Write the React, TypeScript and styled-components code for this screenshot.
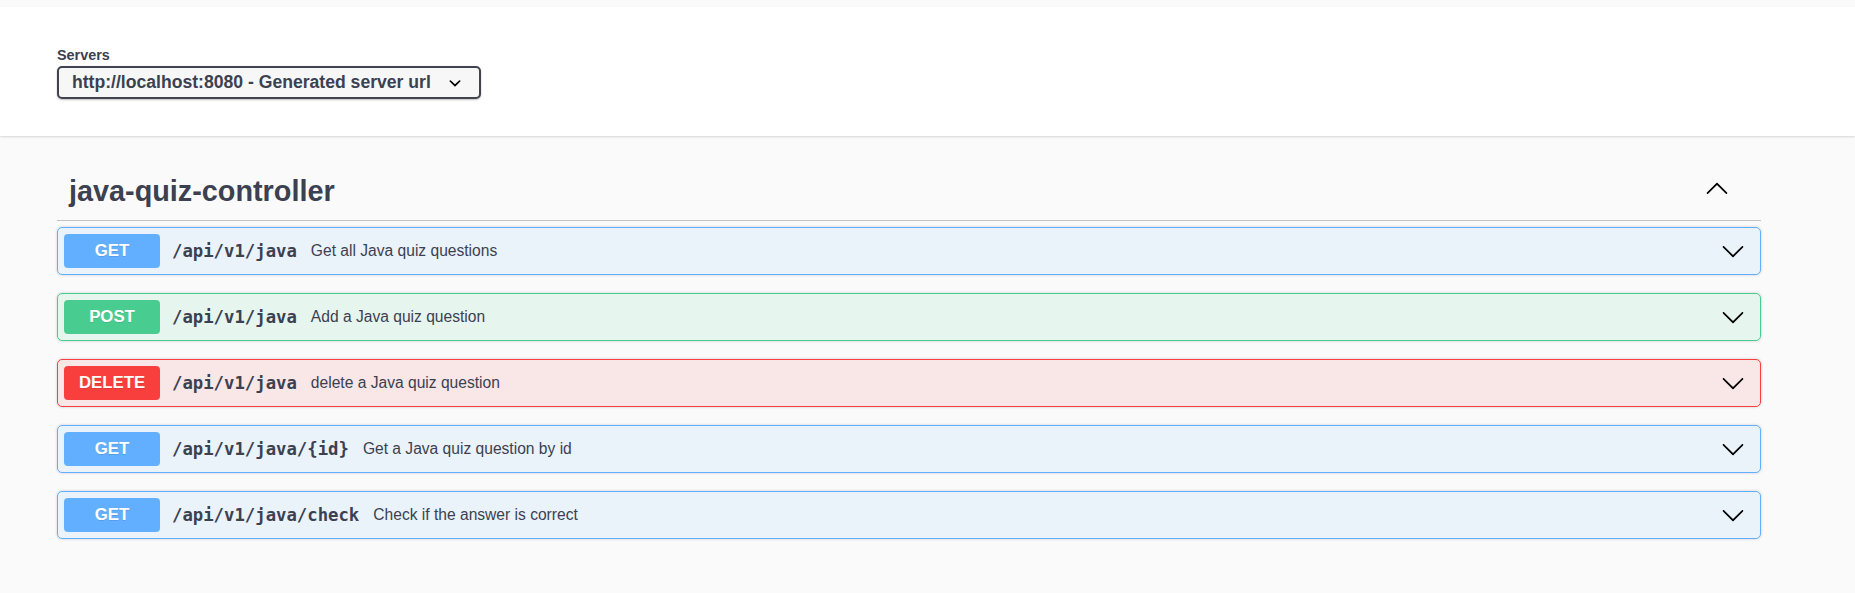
import React from "react";
import styled, { createGlobalStyle } from "styled-components";

const GlobalStyle = createGlobalStyle`
  html, body { margin: 0; padding: 0; }
  body {
    background: #fafafa;
    font-family: "Liberation Sans", Arial, sans-serif;
    color: #3b4151;
  }
`;

const Page = styled.div`
  min-height: 593px;
  padding-top: 7px;
  background: #fafafa;
`;

const SchemeContainer = styled.div`
  background: #fff;
  box-shadow: 0 1px 2px 0 rgba(0, 0, 0, 0.15);
  padding: 40px 57px 37px;
`;

const ServersBlock = styled.div`
  display: flex;
  flex-direction: column;
  align-items: flex-start;
`;

const ServersTitle = styled.span`
  font-size: 14.4px;
  line-height: 17px;
  font-weight: 700;
  color: #3b4151;
`;

const SelectBox = styled.div`
  margin-top: 2px;
  box-sizing: border-box;
  width: 424px;
  height: 33px;
  display: flex;
  align-items: center;
  justify-content: space-between;
  padding: 0 12px 0 13px;
  border: 2px solid #41444e;
  border-radius: 5px;
  background: #f7f7f7;
  box-shadow: 0 1px 2px 0 rgba(0, 0, 0, 0.25);
  font-size: 17.6px;
  font-weight: 700;
  color: #3b4151;
  white-space: nowrap;
`;

const Wrapper = styled.div`
  padding: 27px 94px 40px 57px;
`;

const TagHeading = styled.h3`
  margin: 0 0 6px;
  display: flex;
  align-items: center;
  justify-content: space-between;
  padding: 12px 32px 12px 12px;
  border-bottom: 1px solid rgba(59, 65, 81, 0.3);
  font-size: 28.8px;
  line-height: 33px;
  font-weight: 700;
  color: #3b4151;
`;

const HeadArrow = styled.svg`
  margin-bottom: 5px;
  fill: #000;
`;

const palette = {
  get: "97, 175, 254",
  post: "73, 204, 144",
  delete: "249, 62, 62",
} as const;

type Method = keyof typeof palette;

const OpBlock = styled.div<{ $m: Method }>`
  box-sizing: border-box;
  height: 48px;
  margin-bottom: 18px;
  display: flex;
  align-items: center;
  padding: 0 6px;
  border: 1px solid rgb(${(p) => palette[p.$m]});
  border-radius: 5px;
  background: rgba(${(p) => palette[p.$m]}, 0.1);
  box-shadow: 0 0 3px rgba(0, 0, 0, 0.19);
`;

const MethodBadge = styled.span<{ $m: Method }>`
  flex: none;
  width: 96px;
  height: 34px;
  display: flex;
  align-items: center;
  justify-content: center;
  border-radius: 4px;
  background: rgb(${(p) => palette[p.$m]});
  color: #fff;
  font-size: 16.8px;
  font-weight: 700;
  text-shadow: 0 1px 0 rgba(0, 0, 0, 0.1);
`;

const PathText = styled.span`
  padding: 0 14px 0 12px;
  font-family: "DejaVu Sans Mono", "Liberation Mono", monospace;
  font-size: 17.3px;
  font-weight: 700;
  color: #3b4151;
`;

const Desc = styled.span`
  flex: 1;
  font-size: 15.6px;
  color: #3b4151;
`;

const RowArrow = styled.svg`
  flex: none;
  margin-right: 9px;
  fill: #000;
`;

const arrowPath =
  "M17.418 6.109c.272-.268.709-.268.979 0s.271.701 0 .969l-7.908 7.83c-.27.268-.707.268-.979 0l-7.908-7.83c-.27-.268-.27-.701 0-.969.271-.268.709-.268.979 0L10 13.25l7.418-7.141z";

const smallArrowPath =
  "M13.418 7.859a.695.695 0 01.978 0 .68.68 0 010 .969l-3.908 3.83a.697.697 0 01-.979 0l-3.908-3.83a.68.68 0 010-.969.695.695 0 01.978 0L10 11l3.418-3.141z";

const ops: { m: Method; label: string; path: string; desc: string }[] = [
  { m: "get", label: "GET", path: "/api/v1/java", desc: "Get all Java quiz questions" },
  { m: "post", label: "POST", path: "/api/v1/java", desc: "Add a Java quiz question" },
  { m: "delete", label: "DELETE", path: "/api/v1/java", desc: "delete a Java quiz question" },
  { m: "get", label: "GET", path: "/api/v1/java/{id}", desc: "Get a Java quiz question by id" },
  { m: "get", label: "GET", path: "/api/v1/java/check", desc: "Check if the answer is correct" },
];

export default function App() {
  return (
    <>
      <GlobalStyle />
      <Page>
        <SchemeContainer>
          <ServersBlock>
            <ServersTitle>Servers</ServersTitle>
            <SelectBox>
              <span>http://localhost:8080 - Generated server url</span>
              <svg width="24" height="24" viewBox="0 0 20 20" fill="#000">
                <path d={smallArrowPath} />
              </svg>
            </SelectBox>
          </ServersBlock>
        </SchemeContainer>
        <Wrapper>
          <TagHeading>
            <span>java-quiz-controller</span>
            <HeadArrow width="24" height="24" viewBox="0 0 20 20">
              <path d={arrowPath} transform="rotate(180 10 10)" />
            </HeadArrow>
          </TagHeading>
          {ops.map((op, i) => (
            <OpBlock key={i} $m={op.m}>
              <MethodBadge $m={op.m}>{op.label}</MethodBadge>
              <PathText>{op.path}</PathText>
              <Desc>{op.desc}</Desc>
              <RowArrow width="24" height="24" viewBox="0 0 20 20">
                <path d={arrowPath} />
              </RowArrow>
            </OpBlock>
          ))}
        </Wrapper>
      </Page>
    </>
  );
}
